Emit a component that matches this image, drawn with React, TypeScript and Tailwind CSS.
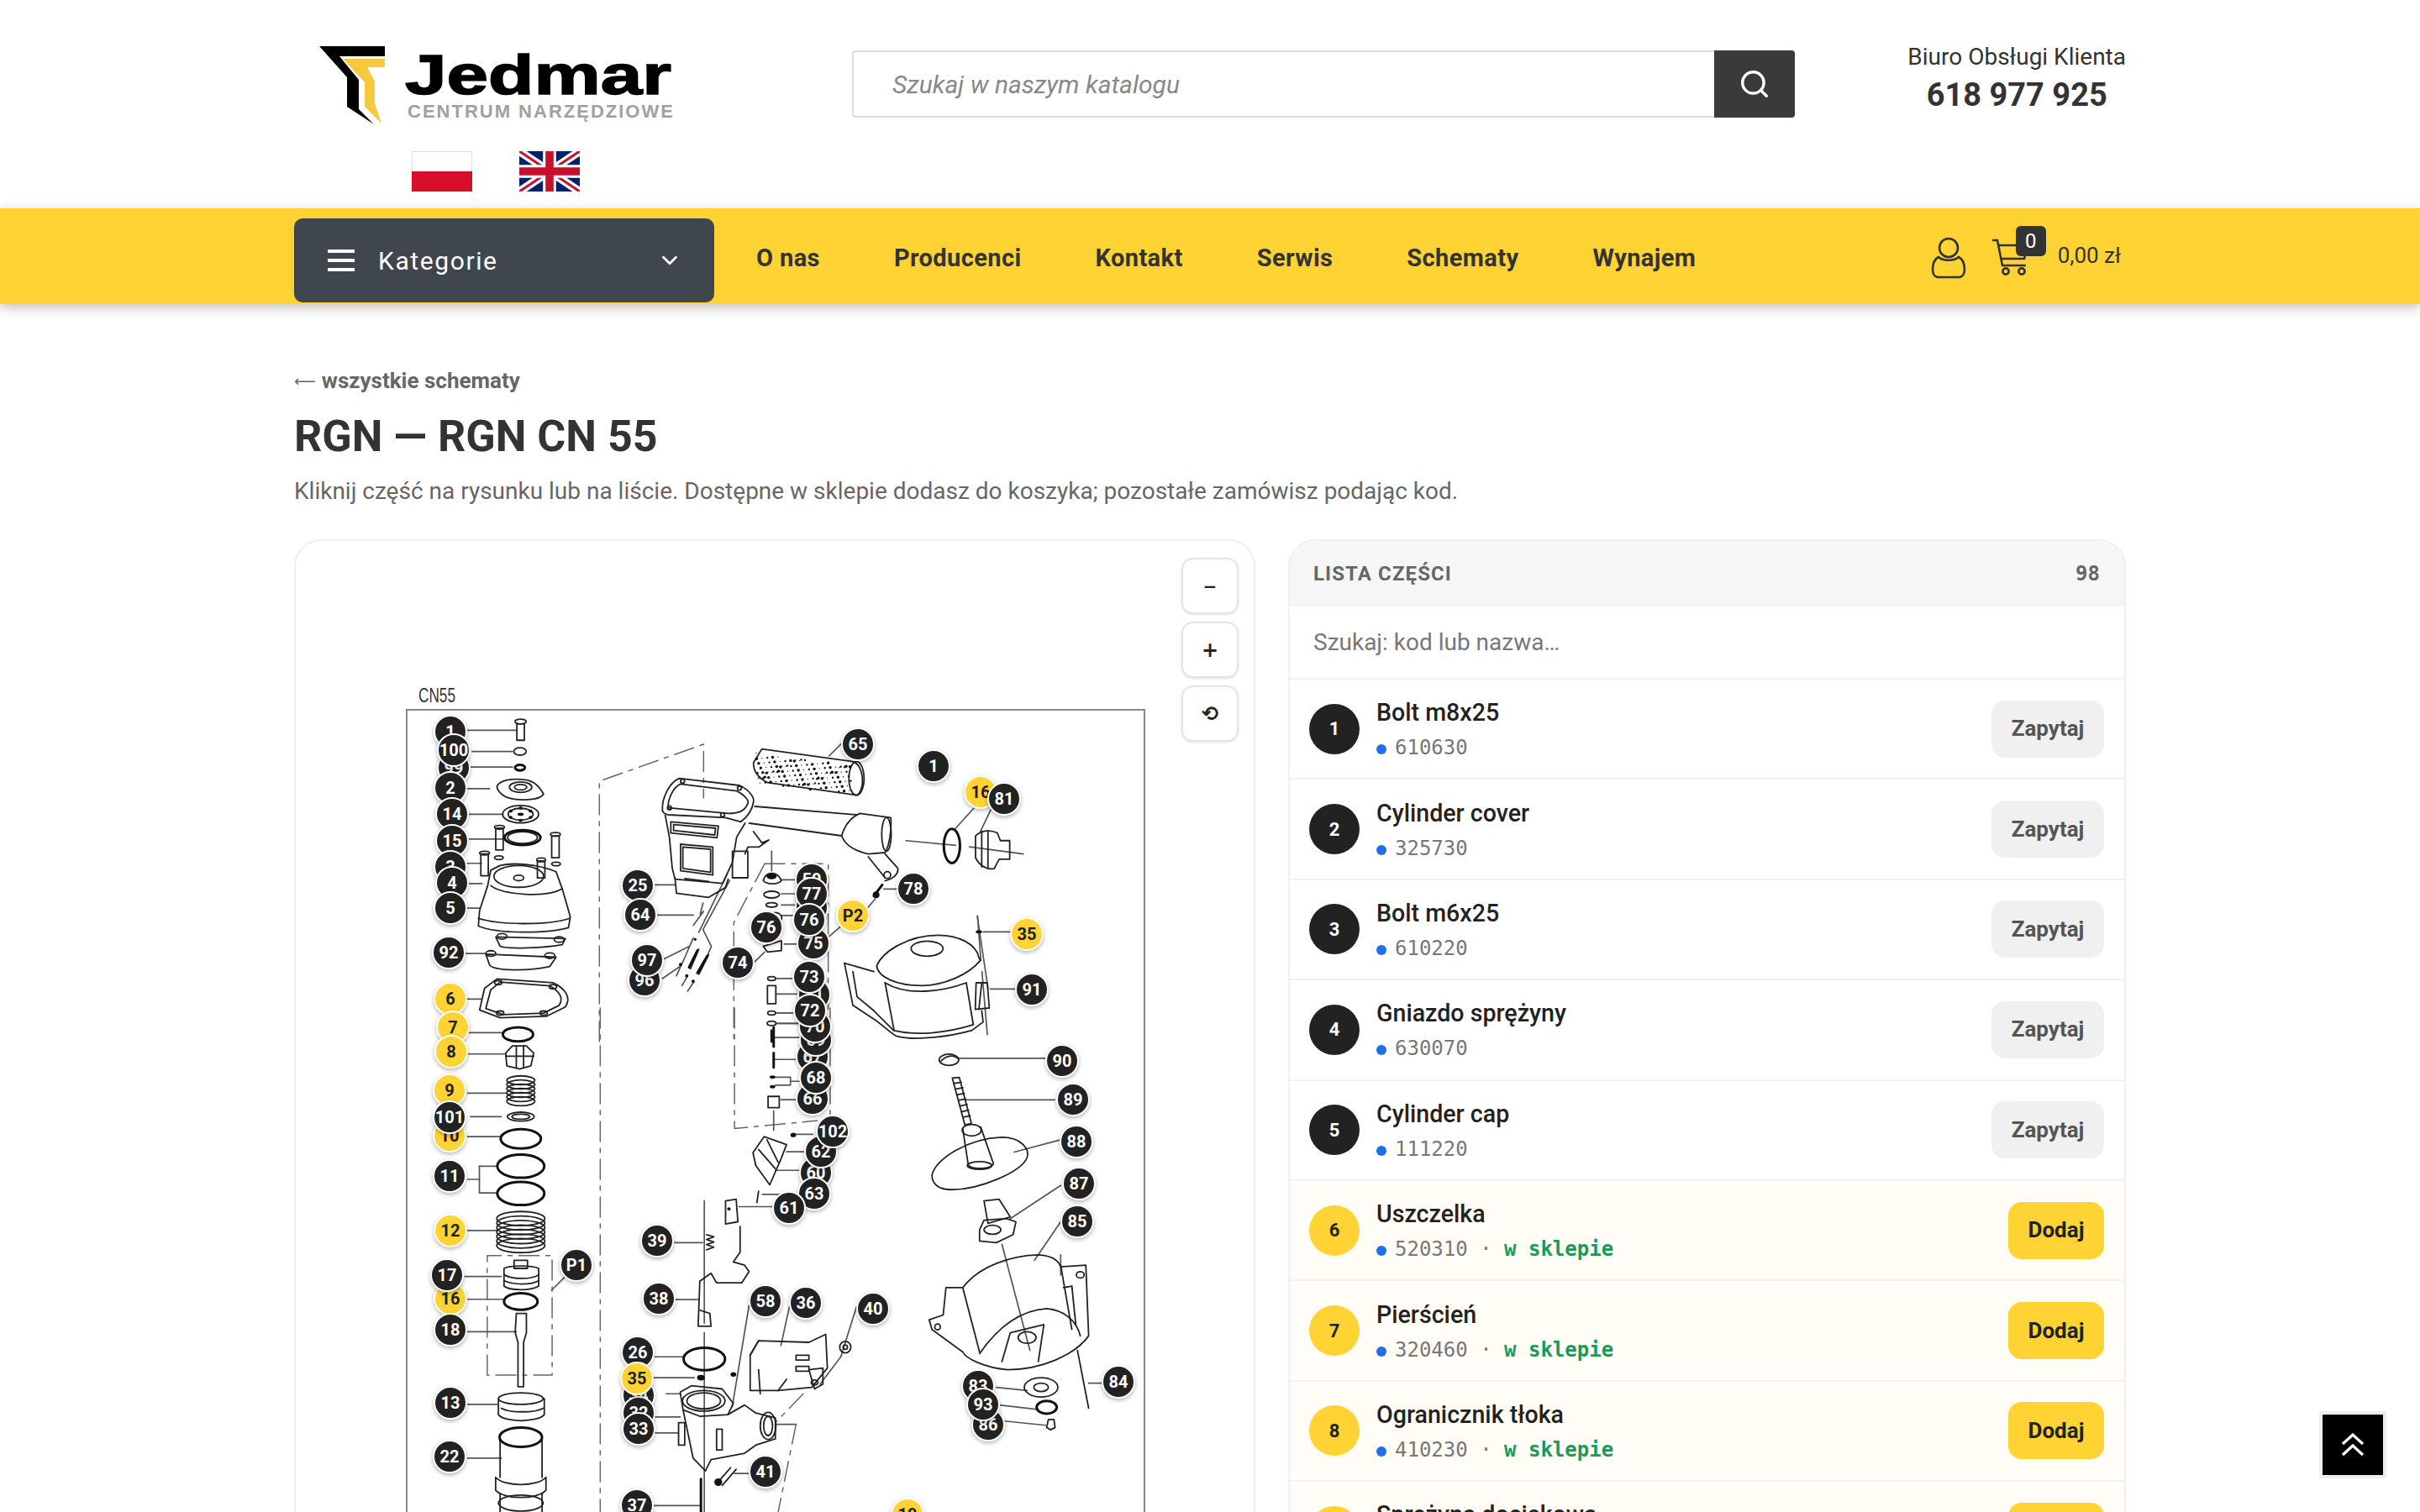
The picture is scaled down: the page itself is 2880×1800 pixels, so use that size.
import React from "react";
import { Search, ChevronDown } from "lucide-react";

const el = (cx: number, cy: number, rx: number, ry: number) =>
  `M${cx - rx} ${cy}a${rx} ${ry} 0 1 0 ${2 * rx} 0a${rx} ${ry} 0 1 0 ${-2 * rx} 0`;

type ArtProps = { t: string; ink?: string[]; thin?: string[]; heavy?: string[]; solid?: string[]; dash?: string[] };

// one group of the exploded drawing, coordinates are those of a zoomed crop
const Art = ({ t, ink = [], thin = [], heavy = [], solid = [], dash = [] }: ArtProps) => (
  <g transform={t} fill="none" strokeLinejoin="round" strokeLinecap="round">
    {dash.map((d, i) => (
      <path key={i} d={d} stroke="#666" strokeWidth={1.5} strokeDasharray="24 8 5 8" vectorEffect="non-scaling-stroke" />
    ))}
    {thin.map((d, i) => (
      <path key={i} d={d} stroke="#555" strokeWidth={1.7} vectorEffect="non-scaling-stroke" />
    ))}
    {ink.map((d, i) => (
      <path key={i} d={d} stroke="#222" strokeWidth={1.8} vectorEffect="non-scaling-stroke" />
    ))}
    {heavy.map((d, i) => (
      <path key={i} d={d} stroke="#111" strokeWidth={3} vectorEffect="non-scaling-stroke" />
    ))}
    {solid.map((d, i) => (
      <path key={i} d={d} fill="#111" />
    ))}
  </g>
);

const foamDots = Array.from({ length: 130 }, (_, i) => {
  const a = (i * 0.618034) % 1;
  const b = (i * 0.754877) % 1;
  const x = 600 + a * 340;
  const y = 170 + a * 45 + b * 105;
  return el(x, y, 2 + (i % 3) * 1.6, 2 + (i % 3) * 1.6);
});

const stack = (cx: number, y0: number, y1: number, step: number, rx: number, ry: number) => {
  const out: string[] = [];
  for (let y = y0; y <= y1; y += step) out.push(el(cx, y, rx, ry));
  return out;
};

const Drawing = () => (
  <svg className="absolute left-0 top-0 w-[1144px] h-[1200px]" viewBox="352 644 1144 1200">
    <text x="498" y="836" fontFamily="Liberation Sans" fontSize="24" fill="#333" textLength="44" lengthAdjust="spacingAndGlyphs">
      CN55
    </text>
    <rect x="484" y="845" width="878" height="1100" fill="none" stroke="#888" strokeWidth="2" />

    {/* upper left column, fan, end cap */}
    <Art
      t="translate(340 640) scale(0.7396 0.37)"
      thin={[
        "M292 620H370", "M300 688H365", "M298 738H365", "M292 808H328", "M295 890H350", "M295 970H350",
        "M290 1048H315", "M292 1113H316", "M290 1192H312", "M288 1338H320", "M290 1485H315",
        "M998 975L1078 990", "M1100 995L1187 1018", "M1112 860L1078 935", "M1136 870L1118 945",
        "M1113 1220L1130 1450",
      ]}
      ink={[
        "M372 598V652H384V598", el(378, 592, 9, 8), el(377, 688, 10, 12),
        "M340 800C345 780 365 775 380 778C395 780 405 790 415 825C410 845 375 850 355 835C345 825 340 815 340 800Z",
        el(378, 803, 18, 17), el(378, 803, 10, 9),
        el(378, 890, 29, 28), el(378, 890, 20, 19),
        el(381, 965, 24, 19),
        "M338 935V1005H350V935Z", el(344, 932, 8, 6), "M428 960V1030H440V960Z", el(434, 955, 8, 6),
        el(343, 1030, 7, 6), el(435, 1050, 7, 6),
        "M314 1018V1088H326V1018Z", el(320, 1015, 8, 6), "M405 1040V1095H417V1040Z", el(411, 1037, 7, 6),
        "M345 1055C365 1045 405 1050 435 1075L445 1130L458 1220L455 1255C420 1275 340 1275 310 1250L312 1200L325 1120L330 1070Z",
        "M310 1225C340 1245 420 1250 457 1225", "M330 1120C350 1150 420 1160 445 1130",
        el(375, 1090, 40, 35), el(375, 1095, 8, 9),
        "M338 1285L450 1290L445 1310C420 1320 355 1325 345 1315Z", el(348, 1283, 8, 9), el(440, 1293, 8, 9),
        "M322 1340L435 1350L425 1380C390 1395 335 1395 328 1375Z", el(330, 1338, 8, 9), el(425, 1345, 8, 9),
        "M340 1420L430 1432C450 1450 460 1480 450 1510L420 1540L345 1545L312 1520L320 1450Z",
        "M345 1430L425 1442C440 1460 448 1480 440 1505L415 1530L350 1535L322 1515L330 1455Z",
        el(342, 1432, 6, 7), el(430, 1445, 6, 7), el(345, 1530, 6, 7), el(415, 1530, 6, 7),
        "M1110 960C1120 940 1135 940 1145 950L1150 975H1165V1035H1148L1140 1065C1125 1070 1115 1050 1110 1030Z",
        "M1120 945V1060", "M1130 945V1065",
      ]}
      heavy={[el(377, 740, 8, 9), el(381, 965, 29, 24), el(1072, 992, 13, 55)]}
      solid={[
        el(378, 890, 5, 5), el(362, 880, 3, 5), el(394, 880, 3, 5), el(362, 900, 3, 5), el(394, 900, 3, 5), el(378, 870, 3, 5), el(378, 910, 3, 5),
      ]}
    />

    {/* lower left column, magazine, valve, shroud parts */}
    <Art
      t="translate(460 1200) scale(0.6658 0.3827)"
      dash={["M382 0V1568", "M180 1142V770H296V1142Z", "M622 0V375L770 350", "M793 0V330", "M732 1295L700 1568", "M745 1200L695 1290"]}
      thin={[
        "M145 77H207", "M145 143H212", "M145 265H215", "M150 338H205", "M145 400H204",
        "M145 533H166", "M166 492H198", "M166 492V575", "M166 575H198",
        "M145 692H197", "M140 835H205", "M145 906H210", "M145 1007H232", "M145 1233H200", "M145 1400H205",
        "M295 878L318 838",
        "M700 15H740", "M700 48H740", "M695 92H742", "M695 160H740", "M695 215H722V240H695", "M722 228H742", "M705 285H735", "M692 320V380",
        "M730 393H762", "M715 447H750", "M695 505H745", "M672 580H735", "M630 618H695",
        "M568 600V980", "M568 1010V1568", "M515 730H565", "M515 907H558", "M480 1085H530", "M478 1150H550",
        "M648 925L618 1240", "M720 930L705 1050", "M840 930L812 1085L775 1170",
        "M500 1200H525", "M480 1272H525", "M480 1322H520", "M650 1448H622", "M475 1548H560", "M732 1295H695",
        "M1205 410L1122 448", "M1205 552L1115 655", "M1205 665L1158 785", "M1100 735L1150 1065", "M1205 768V830",
        "M1255 1167H1285", "M1090 1180L1145 1190", "M1095 1235L1160 1248", "M1105 1285L1178 1298",
      ]}
      ink={[
        "M213 140L225 118H250L263 140L258 180L238 190L215 180Z", "M213 150H263", "M232 118V186", "M245 118V186",
        ...stack(240, 225, 290, 13, 25, 14),
        el(240, 338, 24, 14), el(240, 338, 16, 8),
        ...stack(240, 655, 740, 14, 43, 22),
        "M210 810C220 800 260 800 272 810V865C260 880 220 880 210 865Z", "M228 785H252V810H228Z",
        "M210 830C225 845 260 845 272 830", "M210 848C225 862 260 862 272 848",
        "M232 950H250V1010L245 1040V1178H235V1040L230 1010Z",
        el(240, 1215, 40, 18), "M200 1215V1265C210 1290 270 1290 282 1265V1215", "M205 1245C220 1260 265 1260 280 1245",
        "M203 1335V1460", "M278 1335V1460",
        "M195 1460C210 1490 270 1490 285 1460V1500C270 1530 210 1530 195 1500Z", "M203 1510V1568", "M278 1510V1568", el(240, 1540, 40, 25),
        "M682 275H702V310H682Z",
        "M675 400L715 425L705 470L685 550L660 490L655 450Z", "M665 440L695 500", "M680 410L700 480", "M665 570L662 605",
        "M606 600L625 595L628 665L606 672Z",
        "M572 705L585 712L572 720L585 728L572 736L585 744L572 752",
        "M632 680V760L620 790L640 800L648 820L635 855L590 855L580 825L560 850L557 990L580 990L578 950L560 940",
        "M665 1035L755 1040L785 1015L788 1120L760 1180L700 1190L650 1190V1080Z", "M650 1080L665 1035", "M700 1190L715 1155", "M665 1125L668 1200",
        "M732 1080H755V1095H732Z", "M732 1115H755V1130H732Z", "M755 1125L780 1120V1170L765 1185Z", el(765, 1165, 6, 8),
        el(820, 1055, 10, 18), el(820, 1055, 4, 7),
        "M525 1195L545 1175L600 1185L620 1230L610 1265L560 1270L530 1250Z", el(567, 1222, 38, 32), el(567, 1222, 30, 25),
        "M530 1250L548 1400L570 1440L580 1405L640 1385L660 1360L695 1340V1275L660 1260L640 1235L610 1265",
        el(682, 1300, 14, 42), el(682, 1300, 8, 30),
        "M522 1290V1360H533V1290Z", "M590 1310V1375H600V1310Z", "M590 1480L615 1430", "M600 1485L625 1435",
        "M975 520C980 470 1040 405 1100 402C1135 402 1150 440 1145 465C1135 510 1060 565 1010 565C985 565 975 545 975 520Z",
        "M1030 375L1040 490C1050 505 1080 500 1085 485L1062 370", el(1046, 380, 17, 18), el(1060, 490, 22, 12),
        "M1060 690L1068 660L1108 655L1125 665L1120 705L1090 730L1060 725Z", "M1068 600L1095 595L1115 650L1075 670Z", el(1083, 690, 15, 14),
        "M1030 870C1060 800 1120 770 1165 768C1185 770 1200 780 1205 805L1250 800L1255 1020C1230 1080 1170 1125 1110 1125C1070 1120 1035 1090 1030 1070L975 1000L970 970L995 955L1000 870Z",
        "M1060 1075C1090 1000 1130 940 1180 935C1215 940 1235 980 1240 1020", "M1030 870L1060 1070", "M1100 1100L1115 1010L1175 985L1165 1100",
        el(1145, 1025, 16, 18), el(1240, 830, 7, 10), "M1205 800L1225 1000", "M1210 870L1225 865L1232 985", el(985, 992, 5, 9),
        "M1235 1065L1255 1245", el(1170, 1180, 30, 30), el(1170, 1180, 13, 13),
        "M1183 1280H1193L1195 1305L1187 1312L1180 1305Z",
      ]}
      heavy={[
        el(235, 82, 27, 22), el(240, 407, 36, 30), el(240, 492, 42, 36), el(240, 577, 42, 36), el(240, 913, 30, 26),
        el(240, 1335, 38, 30), "M692 60V120", "M692 140V185", el(568, 1092, 37, 35), "M562 1465V1568", el(1180, 1242, 18, 20),
      ]}
      solid={[
        el(690, 215, 5, 5), el(690, 245, 5, 5), el(727, 395, 5, 7), el(612, 625, 3, 5), el(562, 1150, 7, 9), el(620, 1140, 5, 7), el(593, 1475, 7, 12),
      ]}
    />

    {/* nailer head and magazine */}
    <Art
      t="translate(700 840) scale(0.3333)"
      dash={["M40 1200V270L412 138V330", "M630 565H857V1200", "M630 565L520 775V1200"]}
      thin={[
        "M910 130L860 180", "M240 640H310", "M248 748H375", "M270 905L360 860", "M265 975L330 930", "M595 915L630 880",
        "M900 790L860 825", "M1000 720L1025 690", "M1055 655H1110", "M655 520V590",
        "M690 622H745", "M690 672H745", "M690 712H745", "M690 750H740", "M700 852H750", "M670 975H740", "M670 1030H750", "M670 1098H750", "M670 1135H750",
        "M410 705L400 745L412 735L375 785", "M495 605L395 810", "M505 625L410 800L440 860L400 950", "M375 830L345 900L315 965", "M352 970L335 1000", "M375 990L355 1020",
      ]}
      ink={[
        "M265 375C262 330 290 275 325 260L540 285C575 300 595 330 590 345C585 375 565 400 545 415L490 400L285 390C275 388 268 385 265 375Z",
        "M285 365C285 330 305 290 330 280L530 305C560 320 575 340 570 350C560 375 540 385 500 385Z",
        el(337, 270, 7, 7), el(540, 295, 7, 7), el(290, 365, 7, 7), el(480, 390, 7, 7),
        "M275 392L290 470L300 580L310 620L480 635L515 560L530 470L560 420",
        "M295 415L465 430L460 472L295 455Z", "M305 425L455 438L452 462L305 446Z",
        "M330 495L445 505V605L330 590Z", "M338 505L437 513V595L338 582Z",
        "M310 615L315 670L430 685L490 650L500 620", "M345 618L430 628",
        "M595 360L960 390", "M575 420L905 465",
        "M905 465C915 430 935 400 970 385L1080 400C1085 440 1075 500 1060 525L1000 530C960 520 920 505 905 465Z",
        el(1065, 460, 17, 60),
        "M1000 540L1060 615", "M1060 530L1105 580C1110 600 1090 620 1060 625", el(1068, 605, 12, 12),
        "M590 450L620 490L645 480L610 505L570 505L560 530", "M515 520H570V615H515Z",
        "M590 205L620 155L945 200C985 210 990 300 960 320L640 275C610 260 590 240 590 205Z", el(958, 260, 27, 60),
        "M625 625C635 590 675 590 690 625C680 640 635 640 625 625Z", el(655, 675, 28, 12), el(655, 712, 20, 8),
        "M650 745C680 730 695 750 690 765", "M625 860L690 840V875L640 880Z",
        el(655, 975, 14, 7), "M640 1000H670V1065H640Z", el(655, 1098, 14, 7), el(655, 1135, 16, 8),
        "M395 870L365 940", "M430 890L395 960",
      ]}
      heavy={["M655 1160V1200", "M390 875L360 935", "M425 895L390 955", "M1020 680L1050 640"]}
      solid={[...foamDots, el(1028, 676, 12, 12), el(655, 610, 18, 10), el(330, 925, 6, 6), el(352, 965, 6, 6), el(375, 985, 6, 6), el(382, 835, 5, 5)]}
    />

    {/* hand guard and piston */}
    <Art
      t="translate(1040 1000) scale(0.3333)"
      thin={[
        "M390 328H490", "M415 532H505", "M300 780H610", "M330 928H645", "M370 270L382 430", "M386 470L405 695",
      ]}
      ink={[
        "M10 450C30 400 120 340 230 340C300 340 365 370 375 420L380 430C340 480 250 520 170 520C80 520 15 490 10 450Z",
        el(190, 388, 57, 27),
        "M-105 440L0 470", "M-105 440L-75 590L0 640C30 660 60 690 80 700C150 720 280 700 350 680L390 650L385 610",
        "M-75 470L-60 560L0 610L70 680C150 700 260 690 355 660L330 510C250 540 120 560 40 510",
        "M40 510L72 680",
        "M365 510L405 510L412 600L362 605Z", "M385 510L375 605",
        el(268, 785, 35, 20), "M240 790C255 770 285 765 300 780",
        "M280 850L305 848L348 1012L325 1018Z", "M285 870L312 865M290 890L318 885M296 910L323 905M302 930L328 925M308 950L333 945M314 970L338 965M320 990L344 985",
      ]}
      solid={[el(375, 328, 11, 6)]}
    />
  </svg>
);

type MarkerDef = [string, number, number, boolean?];

// order matters: later pins lie over earlier ones
const markers: MarkerDef[] = [
  ["1", 536, 871], ["99", 540, 914], ["100", 540, 893], ["2", 536, 938], ["14", 538, 969], ["15", 538, 1001],
  ["3", 536, 1032], ["4", 538, 1051], ["5", 536, 1081], ["92", 534, 1134], ["6", 536, 1189, true],
  ["7", 539, 1223, true], ["8", 537, 1252, true], ["9", 535, 1298, true], ["10", 535, 1352, true], ["101", 535, 1330],
  ["11", 535, 1400], ["12", 536, 1465, true], ["16", 536, 1546, true], ["17", 532, 1518], ["18", 536, 1583],
  ["13", 536, 1670], ["22", 535, 1734], ["P1", 686, 1506],
  ["65", 1021, 886], ["1", 1111, 912], ["16", 1167, 943, true], ["81", 1195, 951],
  ["25", 759, 1054], ["64", 762, 1089], ["59", 966, 1047], ["71", 966, 1080], ["77", 966, 1064], ["75", 968, 1123],
  ["76", 963, 1095], ["76", 912, 1104], ["P2", 1015, 1090, true], ["78", 1087, 1058], ["35", 1222, 1112, true],
  ["96", 767, 1167], ["97", 770, 1143], ["74", 878, 1146], ["71", 969, 1184], ["73", 963, 1163], ["66", 967, 1308],
  ["67", 967, 1258], ["69", 971, 1238], ["70", 970, 1222], ["72", 964, 1203], ["68", 971, 1283], ["91", 1228, 1178],
  ["60", 971, 1396], ["62", 977, 1371], ["102", 991, 1347], ["63", 969, 1421], ["61", 939, 1438],
  ["39", 782, 1477], ["38", 784, 1546], ["26", 759, 1610], ["34", 760, 1661], ["32", 760, 1682], ["33", 760, 1701],
  ["35", 758, 1641, true], ["37", 758, 1792], ["41", 911, 1752], ["58", 911, 1549], ["36", 959, 1551], ["40", 1039, 1558],
  ["90", 1264, 1263], ["89", 1277, 1309], ["88", 1281, 1359], ["87", 1284, 1409], ["85", 1282, 1454], ["84", 1331, 1645],
  ["86", 1176, 1696], ["83", 1164, 1650], ["93", 1170, 1672], ["19", 1080, 1803, true],
];

type Part = { no: number; name: string; code: string; shop?: boolean };

const parts: Part[] = [
  { no: 1, name: "Bolt m8x25", code: "610630" },
  { no: 2, name: "Cylinder cover", code: "325730" },
  { no: 3, name: "Bolt m6x25", code: "610220" },
  { no: 4, name: "Gniazdo sprężyny", code: "630070" },
  { no: 5, name: "Cylinder cap", code: "111220" },
  { no: 6, name: "Uszczelka", code: "520310", shop: true },
  { no: 7, name: "Pierścień", code: "320460", shop: true },
  { no: 8, name: "Ogranicznik tłoka", code: "410230", shop: true },
  { no: 9, name: "Sprężyna dociskowa", code: "410240", shop: true },
];

const navItems = ["O nas", "Producenci", "Kontakt", "Serwis", "Schematy", "Wynajem"];

const zoomButtons = [
  { glyph: "−", size: "text-[20px]" },
  { glyph: "+", size: "text-[24px]" },
  { glyph: "⟲", size: "text-[24px]" },
];

const UkFlag = () => (
  <svg className="w-[72px] h-[48px]" viewBox="0 0 60 40" preserveAspectRatio="none">
    <rect width="60" height="40" fill="#012169" />
    <path d="M0 0L60 40M60 0L0 40" stroke="#fff" strokeWidth="8" />
    <path d="M0 0L60 40M60 0L0 40" stroke="#c8102e" strokeWidth="2.6" />
    <path d="M30 0V40M0 20H60" stroke="#fff" strokeWidth="13" />
    <path d="M30 0V40M0 20H60" stroke="#c8102e" strokeWidth="8" />
  </svg>
);

const App: React.FC = () => {
  return (
    <div className="relative h-[1800px] overflow-hidden bg-white font-['Roboto',sans-serif] text-[#333]">
      <header className="h-[248px] w-[2180px] mx-auto flex items-start">
        <div className="w-[664px] pt-[55px] pl-[30px]">
          <div className="flex items-start h-[125px]">
            <svg className="w-[80px] h-[94px] shrink-0" viewBox="0 0 80 94">
              <polygon points="0,0 78,0 78,12 24,12 47,40 47,75 65,93 33,72 33,37" fill="#000" />
              <polygon points="28,15 78,15 78,25 57,25 66,42 66,68 74,92 54,72 54,43" fill="#f7c93e" />
            </svg>
            <div className="ml-[22px] mt-[-4px]">
              <div className="font-['Liberation_Sans',sans-serif] font-bold text-[66px] leading-[76px] text-black origin-left scale-x-[1.35] [-webkit-text-stroke:1.5px_#000] whitespace-nowrap">
                Jedmar
              </div>
              <div className="ml-[3px] mt-[-7px] font-['Liberation_Sans',sans-serif] font-bold text-[22px] leading-[26px] tracking-[2px] text-[#a0a0a0] whitespace-nowrap">
                CENTRUM NARZĘDZIOWE
              </div>
            </div>
          </div>
          <div className="flex gap-[56px] ml-[110px]">
            <div className="w-[72px] h-[48px] flex flex-col">
              <div className="h-[24px] bg-white border border-b-0 border-[#ddd]" />
              <div className="h-[24px] bg-[#d70f2a]" />
            </div>
            <UkFlag />
          </div>
        </div>
        <div className="mt-[60px] w-[1122px] h-[80px] flex border-2 border-[#ddd] rounded-[4px]">
          <div className="flex-1 flex items-center pl-[46px] italic text-[30px] text-[#888]">Szukaj w naszym katalogu</div>
          <div className="w-[96px] -my-[2px] -mr-[2px] bg-[#3a3a3a] rounded-r-[4px] flex items-center justify-center">
            <Search className="w-[38px] h-[38px] text-white" strokeWidth={2.2} />
          </div>
        </div>
        <div className="ml-auto mt-[48px] text-center">
          <div className="text-[28px] leading-[40px] text-[#333]">Biuro Obsługi Klienta</div>
          <div className="text-[38px] leading-[50px] font-bold text-[#333]">618 977 925</div>
        </div>
      </header>

      <nav className="relative h-[114px] bg-[#ffd333] shadow-[0_4px_14px_rgba(0,0,0,0.25)]">
        <div className="w-[2180px] mx-auto flex items-center h-full">
          <div className="w-[500px] h-[100px] mt-[10px] bg-[#40464d] rounded-[10px] flex items-center pl-[40px] pr-[38px] text-white">
            <div className="flex flex-col gap-[7px] w-[32px]">
              <div className="h-[4px] bg-white" />
              <div className="h-[4px] bg-white" />
              <div className="h-[4px] bg-white" />
            </div>
            <span className="ml-[28px] text-[30px] tracking-[1.6px]">Kategorie</span>
            <ChevronDown className="ml-auto w-[30px] h-[30px]" strokeWidth={2.2} />
          </div>
          <div className="ml-[50px] flex gap-[88px] font-bold text-[29px] tracking-[0.4px] text-[#333] mt-[5px]">
            {navItems.map((item) => (
              <span key={item}>{item}</span>
            ))}
          </div>
          <div className="ml-auto flex items-center pr-[6px] -mt-[3px]">
            <svg className="w-[42px] h-[50px] mt-[6px]" viewBox="0 0 42 50" fill="none" stroke="#333" strokeWidth="2.6">
              <circle cx="21" cy="13" r="11" />
              <path d="M9 24C3 27 2 33 2 39C2 45 5 48 9 48H33C37 48 40 45 40 39C40 33 39 27 33 24C28 29 14 29 9 24Z" />
            </svg>
            <div className="relative ml-[31px] w-[44px] h-[44px] mt-[4px]">
              <svg className="w-[44px] h-[44px]" viewBox="0 0 44 44" fill="none" stroke="#333" strokeWidth="2.6">
                <path d="M0 2H6L12 32H40" />
                <path d="M8 8H42L38 24H11" />
                <circle cx="16" cy="39" r="3.6" />
                <circle cx="35" cy="39" r="3.6" />
              </svg>
              <div className="absolute left-[28px] top-[-15px] w-[36px] h-[36px] rounded-[6px] bg-[#333] text-white text-[24px] flex items-center justify-center">
                0
              </div>
            </div>
            <span className="ml-[34px] text-[26px] text-[#333] mt-[2px]">0,00 zł</span>
          </div>
        </div>
      </nav>

      <main className="w-[2180px] mx-auto pt-[75px]">
        <div className="h-[32px] flex items-center gap-[7px] font-bold text-[26px] text-[#666]">
          <span className="font-normal text-[18px] font-['DejaVu_Sans',sans-serif]">⟵</span> wszystkie schematy
        </div>
        <h1 className="mt-[16px] text-[52px] leading-[70px] font-bold text-[#333]">RGN — RGN CN 55</h1>
        <p className="mt-[8px] text-[28px] leading-[44px] text-[#666]">
          Kliknij część na rysunku lub na liście. Dostępne w sklepie dodasz do koszyka; pozostałe zamówisz podając kod.
        </p>

        <div className="mt-[35px] flex gap-[39px] items-start">
          <section className="relative w-[1144px] h-[1300px] shrink-0 rounded-[32px] border-2 border-[#eee] overflow-hidden">
            <Drawing />
            {markers.map(([label, x, y, yellow], i) => (
              <button
                key={i}
                className={`absolute w-[40px] h-[40px] -ml-[20px] -mt-[20px] rounded-full border-2 border-white shadow-[0_2px_5px_rgba(0,0,0,0.3)] flex items-center justify-center font-bold text-[20px] ${yellow ? "bg-[#ffd333] text-[#222]" : "bg-[#222] text-white"}`}
                style={{ left: x - 352, top: y - 644 }}
              >
                {label}
              </button>
            ))}
            <div className="absolute right-[18px] top-[20px] flex flex-col gap-[9px]">
              {zoomButtons.map((b) => (
                <button
                  key={b.glyph}
                  className={`w-[68px] h-[67px] rounded-[14px] border-2 border-[#e5e5e5] bg-white shadow-[0_1px_3px_rgba(0,0,0,0.12)] flex items-center justify-center font-bold text-[#222] font-['DejaVu_Sans',sans-serif] ${b.size}`}
                >
                  {b.glyph}
                </button>
              ))}
            </div>
          </section>

          <section className="w-[997px] h-[1300px] rounded-[32px] border-2 border-[#f0f0f0] overflow-hidden">
            <div className="h-[78px] bg-[#f6f6f6] flex items-center justify-between pl-[28px] pr-[29px] text-[24px] font-bold text-[#666]">
              <span className="tracking-[1.1px]">LISTA CZĘŚCI</span>
              <span className="font-['DejaVu_Sans_Mono',monospace]">98</span>
            </div>
            <div className="h-[87px] flex items-center pl-[28px] text-[28px] text-[#777] border-b-2 border-[#f2f2f2]">
              Szukaj: kod lub nazwa…
            </div>
            {parts.map((p) => (
              <div
                key={p.no}
                className={`h-[119.4px] flex items-center pl-[23px] pr-[24px] border-b-2 border-[#f2f2f2] ${p.shop ? "bg-[#fffdf6]" : "bg-white"}`}
              >
                <div
                  className={`w-[60px] h-[60px] rounded-full flex items-center justify-center font-bold text-[22px] ${p.shop ? "bg-[#ffd333] text-[#222]" : "bg-[#222] text-white"}`}
                >
                  {p.no}
                </div>
                <div className="ml-[20px] mt-[3px]">
                  <div className="text-[28.6px] leading-[38px] font-medium text-[#222]">{p.name}</div>
                  <div className="mt-[4px] flex items-center text-[24px] leading-[38px] font-['DejaVu_Sans_Mono',monospace] text-[#777] whitespace-pre">
                    <span className="w-[12px] h-[12px] rounded-full bg-[#1f6feb] mr-[10px] mt-[4px]" />
                    {p.code}
                    {p.shop && (
                      <>
                        {" · "}
                        <span className="font-bold text-[#1a9a55]">w sklepie</span>
                      </>
                    )}
                  </div>
                </div>
                <button
                  className={`ml-auto h-[68px] rounded-[16px] font-bold text-[26px] ${p.shop ? "w-[114px] bg-[#ffd333] text-[#222]" : "w-[134px] bg-[#f0f0f0] text-[#555]"}`}
                >
                  {p.shop ? "Dodaj" : "Zapytaj"}
                </button>
              </div>
            ))}
          </section>
        </div>
      </main>

      <button className="fixed right-[40px] bottom-[40px] w-[80px] h-[80px] bg-black border-4 border-[#eee] flex items-center justify-center">
        <svg className="w-[28px] h-[28px]" viewBox="0 0 28 28" fill="none" stroke="#fff" strokeWidth="3.2">
          <path d="M2 13L14 2L26 13" />
          <path d="M2 26L14 15L26 26" />
        </svg>
      </button>
    </div>
  );
};

export default App;
